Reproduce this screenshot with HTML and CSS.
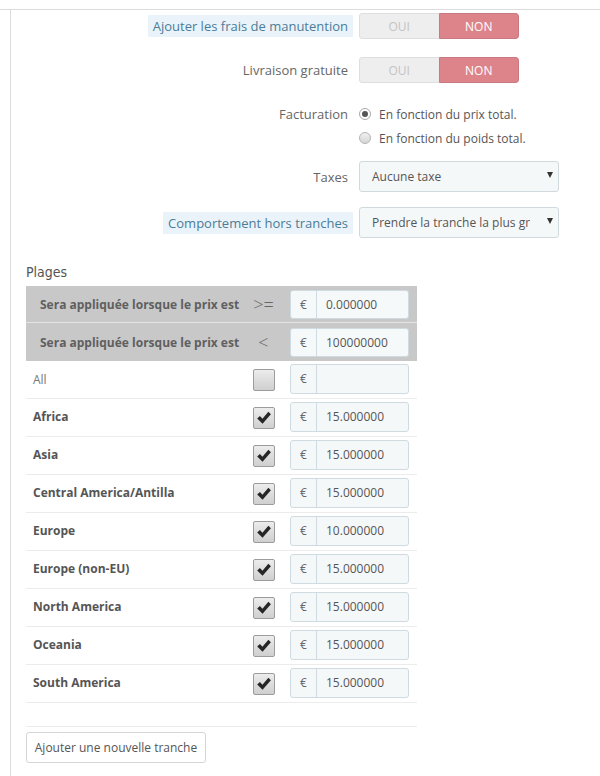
FILE: index.html
```html
<!DOCTYPE html>
<html>
<head>
<meta charset="utf-8">
<link rel="stylesheet" href="styles.css">
</head>
<body>
<div class="frame">
  <div class="panel">
    <div class="row r1">
      <div class="lbl"><span class="tip">Ajouter les frais de manutention</span></div>
      <div class="switch"><span class="yes">OUI</span><span class="no">NON</span></div>
    </div>
    <div class="row r2">
      <div class="lbl">Livraison gratuite</div>
      <div class="switch"><span class="yes">OUI</span><span class="no">NON</span></div>
    </div>
    <div class="row r3">
      <div class="lbl lh">Facturation</div>
      <div class="radios">
        <div class="radio"><span class="dot on"></span>En fonction du prix total.</div>
        <div class="radio"><span class="dot"></span>En fonction du poids total.</div>
      </div>
    </div>
    <div class="row r4">
      <div class="lbl">Taxes</div>
      <div class="select"><span class="val">Aucune taxe</span><span class="caret"></span></div>
    </div>
    <div class="row r5">
      <div class="lbl"><span class="tip">Comportement hors tranches</span></div>
      <div class="select"><span class="val">Prendre la tranche la plus grande</span><span class="caret"></span></div>
    </div>

    <h3 class="plages">Plages</h3>
    <div class="ranges">
      <div class="hrow first">
        <div class="c1">Sera appliquée lorsque le prix est</div>
        <div class="c2 op">&gt;=</div>
        <div class="c3"><div class="ig hig"><span class="add">€</span><span class="inp">0.000000</span></div></div>
      </div>
      <div class="hrow">
        <div class="c1">Sera appliquée lorsque le prix est</div>
        <div class="c2 op">&lt;</div>
        <div class="c3"><div class="ig hig"><span class="add">€</span><span class="inp">100000000</span></div></div>
      </div>
      <div class="brow">
        <div class="c1 all">All</div>
        <div class="c2"><span class="cb"></span></div>
        <div class="c3"><div class="ig"><span class="add">€</span><span class="inp"></span></div></div>
      </div>
      <div class="brow">
        <div class="c1">Africa</div>
        <div class="c2"><span class="cb"><svg viewBox="0 0 22 22" width="20" height="20"><path d="M3.5 11.5 L6.5 8.8 L9.3 11.8 L15.8 4.2 L18.6 6.8 L9.4 17.2 Z" fill="#262626"/></svg></span></div>
        <div class="c3"><div class="ig"><span class="add">€</span><span class="inp">15.000000</span></div></div>
      </div>
      <div class="brow">
        <div class="c1">Asia</div>
        <div class="c2"><span class="cb"><svg viewBox="0 0 22 22" width="20" height="20"><path d="M3.5 11.5 L6.5 8.8 L9.3 11.8 L15.8 4.2 L18.6 6.8 L9.4 17.2 Z" fill="#262626"/></svg></span></div>
        <div class="c3"><div class="ig"><span class="add">€</span><span class="inp">15.000000</span></div></div>
      </div>
      <div class="brow">
        <div class="c1">Central America/Antilla</div>
        <div class="c2"><span class="cb"><svg viewBox="0 0 22 22" width="20" height="20"><path d="M3.5 11.5 L6.5 8.8 L9.3 11.8 L15.8 4.2 L18.6 6.8 L9.4 17.2 Z" fill="#262626"/></svg></span></div>
        <div class="c3"><div class="ig"><span class="add">€</span><span class="inp">15.000000</span></div></div>
      </div>
      <div class="brow">
        <div class="c1">Europe</div>
        <div class="c2"><span class="cb"><svg viewBox="0 0 22 22" width="20" height="20"><path d="M3.5 11.5 L6.5 8.8 L9.3 11.8 L15.8 4.2 L18.6 6.8 L9.4 17.2 Z" fill="#262626"/></svg></span></div>
        <div class="c3"><div class="ig"><span class="add">€</span><span class="inp">10.000000</span></div></div>
      </div>
      <div class="brow">
        <div class="c1">Europe (non-EU)</div>
        <div class="c2"><span class="cb"><svg viewBox="0 0 22 22" width="20" height="20"><path d="M3.5 11.5 L6.5 8.8 L9.3 11.8 L15.8 4.2 L18.6 6.8 L9.4 17.2 Z" fill="#262626"/></svg></span></div>
        <div class="c3"><div class="ig"><span class="add">€</span><span class="inp">15.000000</span></div></div>
      </div>
      <div class="brow">
        <div class="c1">North America</div>
        <div class="c2"><span class="cb"><svg viewBox="0 0 22 22" width="20" height="20"><path d="M3.5 11.5 L6.5 8.8 L9.3 11.8 L15.8 4.2 L18.6 6.8 L9.4 17.2 Z" fill="#262626"/></svg></span></div>
        <div class="c3"><div class="ig"><span class="add">€</span><span class="inp">15.000000</span></div></div>
      </div>
      <div class="brow">
        <div class="c1">Oceania</div>
        <div class="c2"><span class="cb"><svg viewBox="0 0 22 22" width="20" height="20"><path d="M3.5 11.5 L6.5 8.8 L9.3 11.8 L15.8 4.2 L18.6 6.8 L9.4 17.2 Z" fill="#262626"/></svg></span></div>
        <div class="c3"><div class="ig"><span class="add">€</span><span class="inp">15.000000</span></div></div>
      </div>
      <div class="brow">
        <div class="c1">South America</div>
        <div class="c2"><span class="cb"><svg viewBox="0 0 22 22" width="20" height="20"><path d="M3.5 11.5 L6.5 8.8 L9.3 11.8 L15.8 4.2 L18.6 6.8 L9.4 17.2 Z" fill="#262626"/></svg></span></div>
        <div class="c3"><div class="ig"><span class="add">€</span><span class="inp">15.000000</span></div></div>
      </div>
      <div class="spacer"></div>
      <button class="btn">Ajouter une nouvelle tranche</button>
    </div>
  </div>
</div>
</body>
</html>
```
FILE: styles.css
```css
html, body {
  margin: 0;
  padding: 0;
  background: #fff;
  font-family: "Open Sans", "Liberation Sans", sans-serif;
  font-size: 12px;
  color: #666;
}
.frame {
  margin-top: 9px;
  border-top: 1px solid #dcdcdc;
}
.panel {
  margin-left: 10px;
  border-left: 1px solid #dcdcdc;
  height: 766px;
  padding-top: 3px;
  box-sizing: border-box;
}
.row {
  display: flex;
  align-items: center;
}
.lbl {
  width: 337px;
  margin-right: 11px;
  text-align: right;
  color: #666;
  font-size: 13px;
  line-height: 18px;
}
.tip {
  display: inline-block;
  background: #eaf3f9;
  color: #4b7d98;
  padding: 2px 5px;
  line-height: 18px;
  margin-right: -5px;
}
.r1 { height: 26px; }
.r2 { height: 26px; margin-top: 18px; }
.r3 { margin-top: 19px; align-items: flex-start; }
.r3 .lbl { line-height: 24px; }
.r4 { margin-top: 11px; }
.r5 { margin-top: 15px; }

.switch {
  display: flex;
  width: 160px;
  height: 26px;
  box-sizing: border-box;
  border-radius: 3px;
  overflow: hidden;
  text-transform: uppercase;
}
.switch span {
  flex: 1;
  display: flex;
  align-items: center;
  justify-content: center;
}
.yes {
  background: #eeeeee;
  color: #c4c4c4;
  border: 1px solid #dedede;
  border-right: none;
  border-radius: 3px 0 0 3px;
}
.no {
  background: #dd848b;
  color: #fff;
  border: 1px solid #c97a80;
  border-radius: 0 3px 3px 0;
}

.radios { display: flex; flex-direction: column; }
.radio {
  height: 24px;
  display: flex;
  align-items: center;
  color: #555;
}
.dot {
  width: 12px;
  height: 12px;
  box-sizing: border-box;
  border-radius: 50%;
  border: 1px solid #b5b5b5;
  background: linear-gradient(#f0f0f0, #d6d6d6);
  margin-right: 8px;
  position: relative;
}
.dot.on {
  background: #fff;
  border-color: #a9a9a9;
}
.dot.on::after {
  content: "";
  position: absolute;
  left: 2px;
  top: 2px;
  width: 6px;
  height: 6px;
  border-radius: 50%;
  background: #555;
}

.select {
  width: 200px;
  height: 31px;
  box-sizing: border-box;
  border: 1px solid #d0dade;
  border-radius: 3px;
  background: #f5f8f9;
  display: flex;
  align-items: center;
  padding-left: 12px;
  color: #555;
}
.val {
  width: 158px;
  white-space: nowrap;
  overflow: hidden;
}
.caret {
  margin-left: 17px;
  width: 0;
  height: 0;
  border-left: 3px solid transparent;
  border-right: 3px solid transparent;
  border-top: 6px solid #333;
  margin-top: -4px;
}

.plages {
  margin: 24px 0 4px 15px;
  font-family: "DejaVu Sans Condensed", "Liberation Sans Narrow", "Open Sans", sans-serif;
  font-stretch: condensed;
  font-weight: normal;
  font-size: 14px;
  line-height: 20px;
  color: #555;
}
.ranges {
  margin-left: 15px;
  width: 391px;
}
.hrow, .brow {
  display: grid;
  grid-template-columns: 219px 37px 135px;
  align-items: center;
}
.hrow {
  background: #c8c8c8;
  height: 38px;
}
.hrow.first {
  height: 36px;
  border-bottom: 1px solid #e4e4e4;
}
.hrow .c1 {
  padding-left: 14px;
  font-weight: bold;
  color: #5f5f5f;
  white-space: nowrap;
}
.c2 { padding-left: 8px; display: flex; }
.hrow .op {
  padding-left: 0;
  justify-content: center;
  font-size: 18px;
  font-weight: 300;
  color: #666;
}
.c3 { padding-left: 8px; }
.brow {
  height: 37px;
  border-bottom: 1px solid #ececec;
}
.brow .c1 {
  padding-left: 7px;
  font-weight: bold;
  color: #555;
  white-space: nowrap;
  margin-top: -3px;
}
.brow .c1.all {
  font-weight: normal;
  color: #777;
  margin-top: 0;
}
.cb {
  width: 22px;
  height: 22px;
  box-sizing: border-box;
  border: 1px solid #9c9c9c;
  border-radius: 2px;
  background: linear-gradient(#ececec, #cfcfcf);
  display: flex;
  align-items: center;
  justify-content: center;
}
.ig {
  display: flex;
  width: 119px;
  height: 30px;
  box-sizing: border-box;
  border: 1px solid #cfdbe0;
  border-radius: 3px;
  background: #f5f8f9;
  color: #555;
  margin-top: -2px;
}
.hig {
  height: 29px;
  margin-top: 0;
  background: #f6f9fa;
}
.add {
  width: 25px;
  border-right: 1px solid #cfdbe0;
  display: flex;
  align-items: center;
  justify-content: center;
  color: #666;
}
.inp {
  flex: 1;
  display: flex;
  align-items: center;
  padding-left: 9px;
  font-size: 12px;
}
.spacer {
  height: 23px;
  border-bottom: 1px solid #ececec;
}
.btn {
  margin-top: 5px;
  height: 31px;
  width: 180px;
  box-sizing: border-box;
  border: 1px solid #d6d6d6;
  border-radius: 3px;
  background: #fff;
  color: #555;
  font-family: "Open Sans", "Liberation Sans", sans-serif;
  font-size: 12px;
  padding: 0;
  display: block;
}
```
